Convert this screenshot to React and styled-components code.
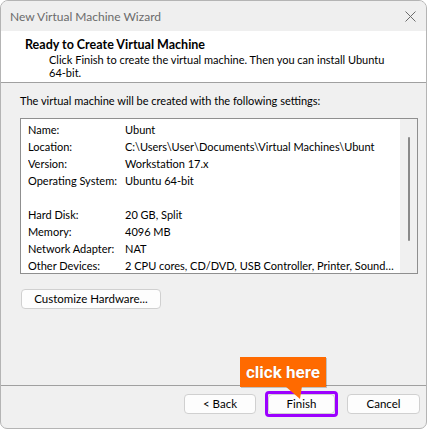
import React from "react";
import styled, { createGlobalStyle } from "styled-components";

const Global = createGlobalStyle`
body{
  margin: 0;
  background: #ffffff;
  font-family: Lato, "Liberation Sans", sans-serif;
}
`

const Window = styled.div`
width: 427px;
height: 429px;
box-sizing: border-box;
border: 1px solid #b4b4b4;
border-radius: 8px 8px 7px 7px;
overflow: hidden;
background: #f0f0f0;
display: flex;
flex-direction: column;
position: relative;
font-size: 11px;
color: #000;
`

const TitleBar = styled.div`
height: 30px;
display: flex;
align-items: center;
justify-content: space-between;
padding: 0 10px 0 9px;
background: #efefef;
color: #6b6b6b;
font-size: 12px;
`

const Close = styled.svg`
width: 11px;
height: 11px;
`

const Header = styled.div`
background: #fff;
height: 52px;
box-sizing: border-box;
border-bottom: 1px solid #a0a0a0;
padding: 6px 0 0 24px;
`

const Heading = styled.div`
font-weight: 700;
font-size: 12.5px;
line-height: 16px;
`

const SubText = styled.div`
width: 340px;
padding-left: 24px;
line-height: 13px;
`

const Body = styled.div`
flex: 1;
padding: 9px 10px 0 19px;
display: flex;
flex-direction: column;
`

const Intro = styled.div`
line-height: 17px;
`

const SettingsBox = styled.div`
margin-top: 9px;
width: 398px;
height: 156px;
box-sizing: border-box;
border: 1px solid #8f8f8f;
background: #fff;
display: flex;
`

const Rows = styled.div`
flex: 1;
min-width: 0;
padding: 2px 0 0 7px;
`

const Row = styled.div`
display: grid;
grid-template-columns: 97px 1fr;
height: 17px;
line-height: 17px;
white-space: nowrap;
overflow: hidden;
`

const Gap = styled.div`
height: 17px;
`

const ScrollTrack = styled.div`
width: 17px;
background: #f0f0f0;
display: flex;
justify-content: center;
padding-top: 18px;
`

const Thumb = styled.div`
width: 2px;
height: 104px;
background: #8a8a8a;
border-radius: 1px;
margin-left: 1px;
`

const Button = styled.button`
font-family: inherit;
font-size: 11.5px;
color: #000;
height: 20px;
box-sizing: border-box;
padding: 0;
width: ${p => p.w}px;
background: #fdfdfd;
border: 1px solid #d0d0d0;
border-radius: 4px;
line-height: 18px;
`

const CustomizeRow = styled.div`
margin-top: 15px;
padding-left: 1px;
`

const Footer = styled.div`
height: 34px;
border-top: 1px solid #a0a0a0;
display: flex;
justify-content: flex-end;
align-items: flex-start;
gap: 11px;
padding: 8px 6px 0 0;
`

const Highlight = styled.div`
border: 3px solid #9c00ff;
border-radius: 4px;
margin: -3px -2px 0;
display: flex;
`

const Callout = styled.div`
position: absolute;
left: 239px;
top: 356px;
width: 86px;
height: 30px;
background: #ff6a00;
color: #fff;
font-family: Roboto, "Liberation Sans", sans-serif;
font-weight: 700;
font-size: 17px;
display: flex;
align-items: center;
justify-content: center;
text-shadow: 0 0 1px rgba(0,0,0,0.25);
box-shadow: 1px 1px 0 rgba(0,0,0,0.2);
`

const Tail = styled.svg`
position: absolute;
left: 284px;
top: 385px;
`

const settings = [
  ["Name:", "Ubunt"],
  ["Location:", "C:\\Users\\User\\Documents\\Virtual Machines\\Ubunt"],
  ["Version:", "Workstation 17.x"],
  ["Operating System:", "Ubuntu 64-bit"],
  null,
  ["Hard Disk:", "20 GB, Split"],
  ["Memory:", "4096 MB"],
  ["Network Adapter:", "NAT"],
  ["Other Devices:", "2 CPU cores, CD/DVD, USB Controller, Printer, Sound\u2026"],
]

const App = () => {
  return (
    <Window>
      <Global />
      <TitleBar>
        <span>New Virtual Machine Wizard</span>
        <Close viewBox="0 0 11 11">
          <path d="M0.5 0.5 L10.5 10.5 M10.5 0.5 L0.5 10.5" stroke="#6b6b6b" strokeWidth="1" fill="none" />
        </Close>
      </TitleBar>
      <Header>
        <Heading>Ready to Create Virtual Machine</Heading>
        <SubText>Click Finish to create the virtual machine. Then you can install Ubuntu 64-bit.</SubText>
      </Header>
      <Body>
        <Intro>The virtual machine will be created with the following settings:</Intro>
        <SettingsBox>
          <Rows>
            {settings.map((s, i) =>
              s ? (
                <Row key={i}>
                  <span>{s[0]}</span>
                  <span>{s[1]}</span>
                </Row>
              ) : (
                <Gap key={i} />
              )
            )}
          </Rows>
          <ScrollTrack>
            <Thumb />
          </ScrollTrack>
        </SettingsBox>
        <CustomizeRow>
          <Button w={140}>Customize Hardware...</Button>
        </CustomizeRow>
      </Body>
      <Footer>
        <Button w={72}>&lt; Back</Button>
        <Highlight>
          <Button w={67}>Finish</Button>
        </Highlight>
        <Button w={73}>Cancel</Button>
      </Footer>
      <Callout>click here</Callout>
      <Tail width="18" height="14" viewBox="0 0 18 14">
        <polygon points="0,0 17,0 15,13" fill="#ff6a00" />
      </Tail>
    </Window>
  )
}

export default App
